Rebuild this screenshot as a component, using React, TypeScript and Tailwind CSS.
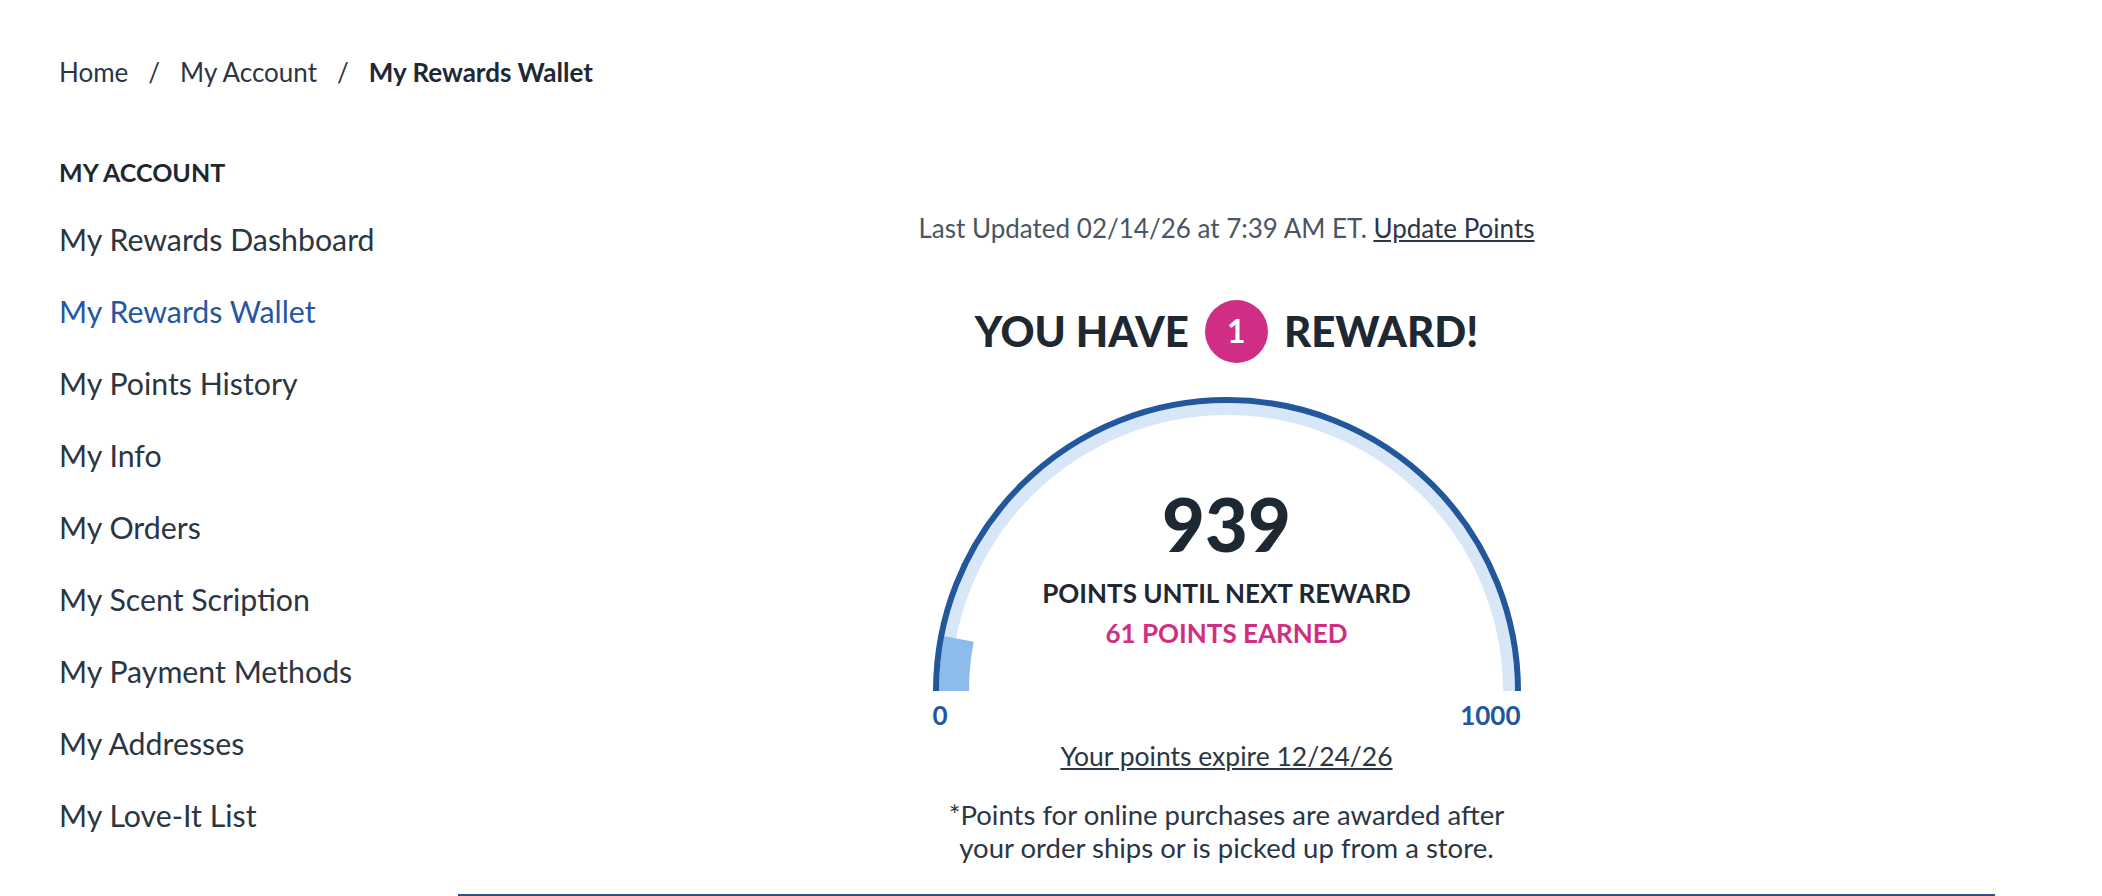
import React from 'react';

const menuItems = [
    'My Rewards Dashboard',
    'My Rewards Wallet',
    'My Points History',
    'My Info',
    'My Orders',
    'My Scent Scription',
    'My Payment Methods',
    'My Addresses',
    'My Love-It List',
];

function arcPath(cx: number, cy: number, r: number, fromDeg: number, toDeg: number) {
    // angles measured from the left end (0) to the right end (180), over the top
    const p = (deg: number) => {
        const a = (deg * Math.PI) / 180;
        return [cx - r * Math.cos(a), cy - r * Math.sin(a)];
    };
    const [x1, y1] = p(fromDeg);
    const [x2, y2] = p(toDeg);
    const large = toDeg - fromDeg > 180 ? 1 : 0;
    return `M ${x1} ${y1} A ${r} ${r} 0 ${large} 1 ${x2} ${y2}`;
}

function Gauge({ earned, goal }: { earned: number; goal: number }) {
    const cx = 294;
    const cy = 294;
    const progressDeg = (earned / goal) * 180;
    return (
        <svg width="588" height="294" viewBox="0 0 588 294" className="block">
            <path d={arcPath(cx, cy, 282, 0, 180)} fill="none" stroke="#d7e7f8" strokeWidth="12" />
            <path d={arcPath(cx, cy, 273, 0, progressDeg)} fill="none" stroke="#8dbbeb" strokeWidth="30" />
            <path d={arcPath(cx, cy, 291, 0, 180)} fill="none" stroke="#22589b" strokeWidth="6" />
        </svg>
    );
}

export default function App() {
    const earned = 61;
    const goal = 1000;

    return (
        <div className="min-h-screen w-full bg-white font-['Lato',sans-serif] text-[#2b3644]">
            <nav className="flex items-center pl-[59px] pt-[56px] text-[26px] leading-[32px] text-[#2b3644]">
                <a href="#">Home</a>
                <span className="px-[20px]">/</span>
                <a href="#">My Account</a>
                <span className="px-[20px]">/</span>
                <span className="font-bold text-[#1e2833]">My Rewards Wallet</span>
            </nav>

            <div className="flex pl-[59px] pr-[107px] pt-[68px]">
                <aside className="w-[399px] shrink-0">
                    <h2 className="mb-[16px] text-[25px] font-bold leading-[32px] text-[#1e2833]">MY ACCOUNT</h2>
                    <ul>
                        {menuItems.map((item) => (
                            <li key={item} className="flex h-[72px] items-center">
                                <a
                                    href="#"
                                    className={`text-[30.3px] ${item === 'My Rewards Wallet' ? 'text-[#2358a1]' : 'text-[#2b3644]'}`}
                                >
                                    {item}
                                </a>
                            </li>
                        ))}
                    </ul>
                </aside>

                <main className="flex flex-1 flex-col items-center border-b-2 border-[#2d5180] pb-[30px] pt-[57px]">
                    <p className="text-[26px] leading-[30px] text-[#4a5563]">
                        Last Updated 02/14/26 at 7:39 AM ET.{' '}
                        <a href="#" className="text-[#2b3644] underline">Update Points</a>
                    </p>

                    <h1 className="mt-[56px] flex items-center gap-[16px] text-[42px] font-black leading-[64px] text-[#1e2833]">
                        <span>YOU HAVE</span>
                        <span className="flex h-[63px] w-[63px] items-center justify-center rounded-full bg-[#cf2e84] text-[32px] font-bold text-white">1</span>
                        <span>REWARD!</span>
                    </h1>

                    <div className="relative mt-[34px]">
                        <Gauge earned={earned} goal={goal} />
                        <div className="absolute inset-x-0 top-[88px] flex flex-col items-center">
                            <span className="text-[74px] font-black leading-[78px] text-[#1e2833]">939</span>
                            <span className="mt-[15px] text-[26px] font-bold leading-[30px] text-[#1e2833]">POINTS UNTIL NEXT REWARD</span>
                            <span className="mt-[10px] text-[26px] font-bold leading-[30px] text-[#cf2e84]">61 POINTS EARNED</span>
                        </div>
                    </div>

                    <div className="mt-[10px] flex w-[588px] justify-between text-[26px] font-bold leading-[28px] text-[#22589b]">
                        <span>0</span>
                        <span>1000</span>
                    </div>

                    <a href="#" className="mt-[12px] text-[26.5px] leading-[30px] text-[#2b3644] underline">
                        Your points expire 12/24/26
                    </a>

                    <p className="mt-[27px] text-center text-[27.5px] leading-[33px] text-[#2b3644]">
                        *Points for online purchases are awarded after
                        <br />
                        your order ships or is picked up from a store.
                    </p>
                </main>
            </div>
        </div>
    );
}
